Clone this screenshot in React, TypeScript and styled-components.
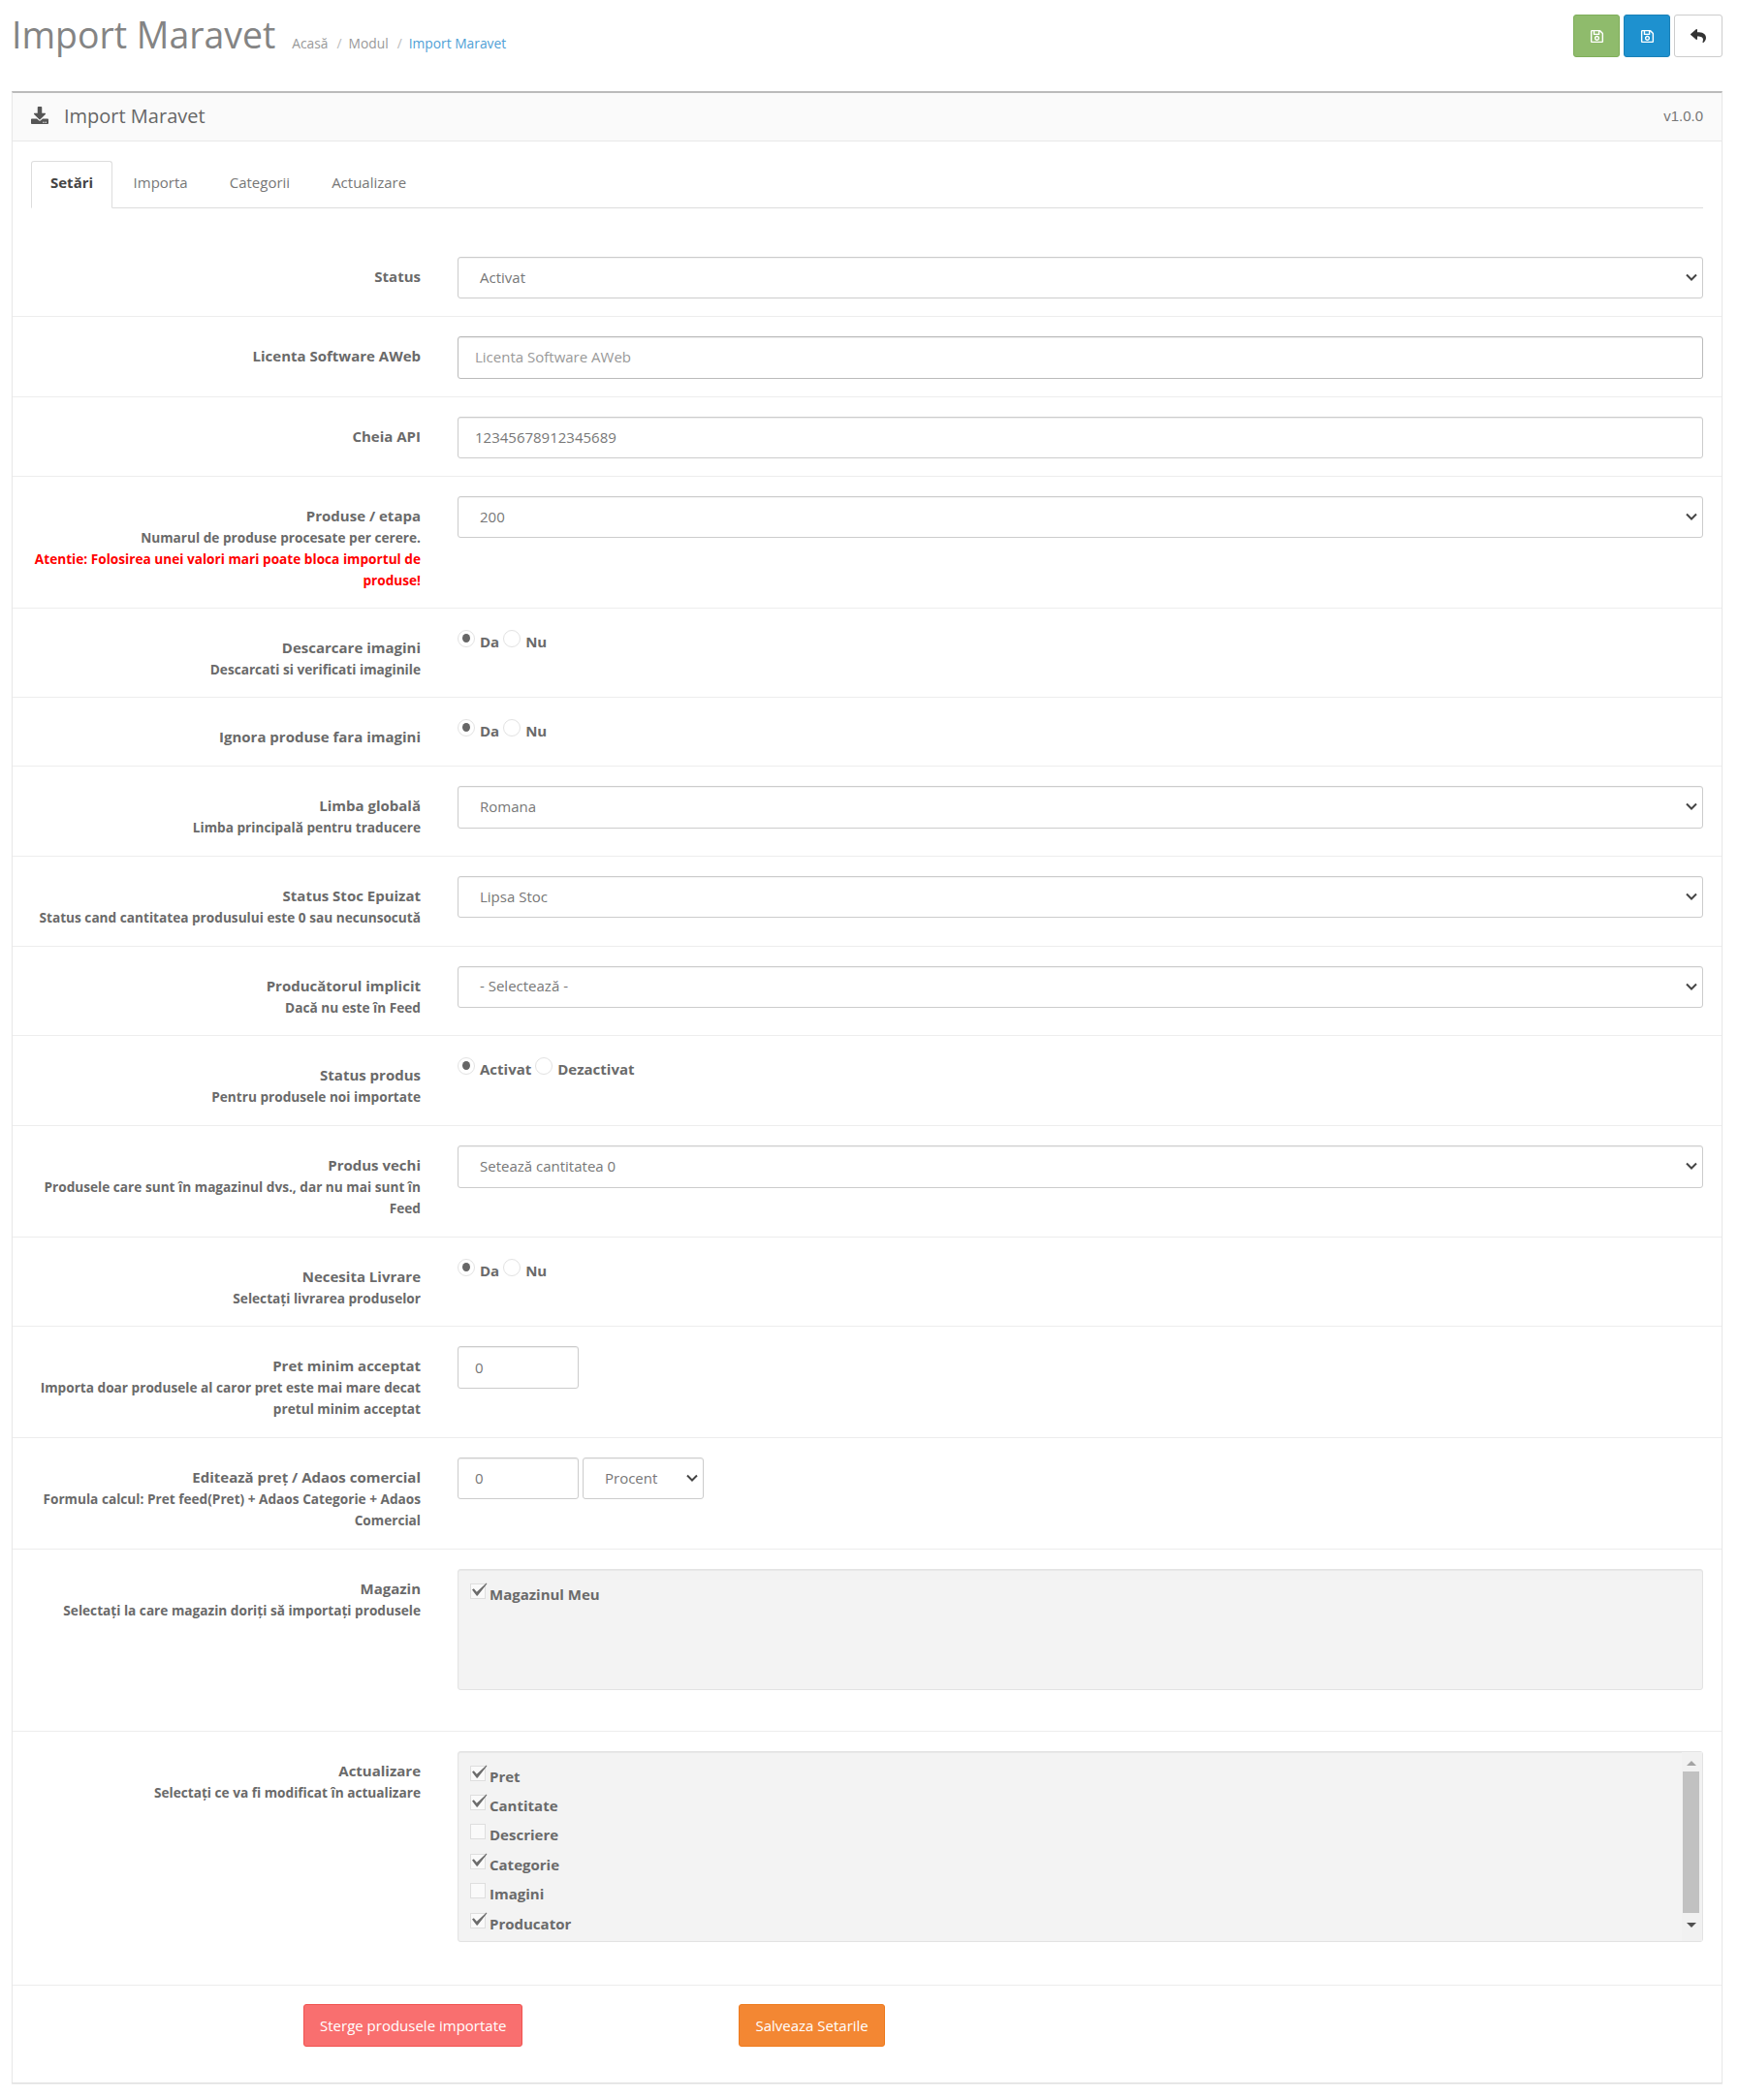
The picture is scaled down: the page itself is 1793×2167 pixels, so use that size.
import React from "react";
import styled, { createGlobalStyle } from "styled-components";
import { FaDownload, FaRegSave, FaReply } from "react-icons/fa";

const Global = createGlobalStyle`
  html, body { margin: 0; padding: 0; background: #fff; }
  body { font-family: "Open Sans", "Liberation Sans", sans-serif; font-size: 14px; color: #666; }
`;

const Page = styled.div`
  width: 1793px;
  height: 2167px;
  box-sizing: border-box;
  padding: 0 16px 0 12px;
  overflow: hidden;
`;

const Header = styled.header`
  display: flex;
  justify-content: space-between;
  align-items: flex-start;
  height: 94px;
`;

const TitleGroup = styled.div`
  display: flex;
  align-items: baseline;
  gap: 17px;
  padding-top: 10px;
`;

const Title = styled.h1`
  margin: 0;
  font-size: 37.4px;
  line-height: 52px;
  font-weight: 400;
  color: #848484;
`;

const Crumbs = styled.ol`
  display: flex;
  margin: 0;
  padding: 0;
  list-style: none;
  font-size: 13.8px;
  color: #999;
`;

const Crumb = styled.li<{ $active?: boolean }>`
  color: ${(p) => (p.$active ? "#4f9fd6" : "#999")};
  &:not(:first-child)::before {
    content: "/";
    padding: 0 7px 0 9px;
    color: #bbb;
  }
`;

const Actions = styled.div`
  display: flex;
  gap: 4px;
  padding-top: 15px;
`;

const ActionButton = styled.button<{ $bg: string; $edge: string; $fg: string; $w: number; $size: number }>`
  display: flex;
  align-items: center;
  justify-content: center;
  width: ${(p) => p.$w}px;
  height: 44px;
  padding: 0;
  background: ${(p) => p.$bg};
  border: 1px solid ${(p) => p.$edge};
  border-radius: 3px;
  color: ${(p) => p.$fg};
  font-size: ${(p) => p.$size}px;
`;

const Panel = styled.section`
  border: 1px solid #e8e8e8;
  border-top: 2px solid #bbb;
  border-bottom: 1px solid #ddd;
  box-shadow: 0 1px 1px rgba(0, 0, 0, 0.05);
`;

const PanelHeading = styled.div`
  display: flex;
  align-items: center;
  box-sizing: border-box;
  height: 50px;
  padding: 0 19px 3px;
  background: #fafafa;
  border-bottom: 1px solid #e8e8e8;
`;

const PanelIcon = styled.span`
  display: flex;
  width: 34px;
  color: #555;
  font-size: 18px;
`;

const PanelTitle = styled.h3`
  flex: 1;
  margin: 0;
  font-size: 20px;
  font-weight: 400;
  color: #666;
`;

const Version = styled.span`
  font-family: "Liberation Sans", Arial, sans-serif;
  font-size: 15px;
  color: #777;
`;

const Tabs = styled.ul`
  display: flex;
  margin: 20px 19px 0;
  padding: 0;
  list-style: none;
  height: 48px;
  border-bottom: 1px solid #ddd;
`;

const Tab = styled.li<{ $active?: boolean }>`
  display: flex;
  align-items: center;
  height: ${(p) => (p.$active ? 49 : 48)}px;
  box-sizing: border-box;
  padding: 0 ${(p) => (p.$active ? 19 : 20.5)}px 5px;
  font-size: 15px;
  font-weight: ${(p) => (p.$active ? 700 : 400)};
  color: ${(p) => (p.$active ? "#444" : "#777")};
  background: ${(p) => (p.$active ? "#fff" : "transparent")};
  border: ${(p) => (p.$active ? "1px solid #ddd" : "1px solid transparent")};
  border-bottom-color: ${(p) => (p.$active ? "#fff" : "transparent")};
  border-radius: 3px 3px 0 0;
`;

const Form = styled.form`
  padding-top: 30px;
`;

const Row = styled.div<{ $end?: number }>`
  display: grid;
  grid-template-columns: 421px 1285px;
  column-gap: 38px;
  padding: 20px 19px ${(p) => 18 + (p.$end ?? 0)}px 0;
  border-bottom: 1px solid #ededed;
  &:last-child { border-bottom: 0; }
`;

const Label = styled.label`
  display: block;
  padding-top: 10px;
  padding-left: 20px;
  text-align: right;
  font-size: 15px;
  line-height: 21.86px;
  font-weight: 700;
  color: #6a6a6a;
`;

const Help = styled.span`
  display: block;
  font-size: 13.65px;
`;

const Warn = styled.span`
  display: block;
  margin-bottom: -0.7px;
  font-size: 13.65px;
  color: #f00;
`;

const Field = styled.input<{ $strong?: boolean }>`
  display: block;
  box-sizing: border-box;
  width: 100%;
  height: 43.33px;
  padding: 0 17px 1px;
  background: #fff;
  border: 1px solid ${(p) => (p.$strong ? "#bbb" : "#ccc")};
  border-radius: 3px;
  box-shadow: inset 0 1px 1px rgba(0, 0, 0, 0.075);
  font: 400 15px "Open Sans", sans-serif;
  color: #777;
  &::placeholder { color: #999; opacity: 1; }
`;

const ShortField = styled(Field)`
  width: 125px;
`;

const Picker = styled.div<{ $short?: boolean }>`
  position: relative;
  display: flex;
  align-items: center;
  box-sizing: border-box;
  width: ${(p) => (p.$short ? "125px" : "100%")};
  height: 43.33px;
  padding: 0 0 2px 22px;
  background: #fff;
  border: 1px solid #ccc;
  border-radius: 3px;
  box-shadow: inset 0 1px 1px rgba(0, 0, 0, 0.05);
  font-size: 15px;
  color: #777;
`;

const Chevron = styled.svg`
  position: absolute;
  right: 5px;
  top: 15px;
  width: 12px;
  height: 10px;
`;

const Inline = styled.div`
  display: flex;
  gap: 4px;
`;

const RadioLine = styled.div`
  display: flex;
  align-items: flex-start;
  font-size: 15px;
  font-weight: 700;
  color: #6a6a6a;
  padding-top: 1px;
`;

const RadioOption = styled.span`
  display: flex;
  align-items: flex-start;
  margin-right: 4px;
  line-height: 26px;
`;

const RadioDot = styled.i<{ $on?: boolean }>`
  position: relative;
  display: block;
  box-sizing: border-box;
  width: 18px;
  height: 18px;
  margin: 1px 5px 0 0;
  background: #fff;
  border: 1px solid #e2e2e2;
  border-radius: 50%;
  &::after {
    content: "";
    display: ${(p) => (p.$on ? "block" : "none")};
    position: absolute;
    left: 4px;
    top: 3px;
    width: 8px;
    height: 9px;
    border-radius: 50%;
    background: #666;
  }
`;

const Well = styled.div<{ $h: number }>`
  display: flex;
  box-sizing: border-box;
  height: ${(p) => p.$h}px;
  background: #f3f3f3;
  border: 1px solid #e3e3e3;
  border-radius: 3px;
  box-shadow: inset 0 1px 1px rgba(0, 0, 0, 0.05);
`;

const CheckList = styled.ul`
  flex: 1;
  margin: 0;
  padding: 10px 0 0 12px;
  list-style: none;
`;

const CheckItem = styled.li`
  display: flex;
  align-items: flex-start;
  height: 30.4px;
  font-size: 15px;
  font-weight: 700;
  line-height: 30px;
  color: #6a6a6a;
`;

const CheckBox = styled.span`
  position: relative;
  display: block;
  box-sizing: border-box;
  width: 16px;
  height: 16px;
  margin: 4px 4px 0 0;
  background: #fafafa;
  border: 1px solid #dedede;
`;

const CheckMark = styled.svg`
  position: absolute;
  left: 0;
  top: -2px;
  width: 18px;
  height: 16px;
`;

const Scrollbar = styled.div`
  display: flex;
  flex-direction: column;
  align-items: center;
  box-sizing: border-box;
  width: 21px;
  padding: 2px 2px 0 0;
  background: #f1f1f1;
`;

const Arrow = styled.i<{ $down?: boolean }>`
  display: block;
  width: 0;
  height: 0;
  margin: ${(p) => (p.$down ? "10px 0 0" : "7px 0 6px")};
  border-left: 5px solid transparent;
  border-right: 5px solid transparent;
  border-bottom: ${(p) => (p.$down ? "0" : "5px solid #a3a3a3")};
  border-top: ${(p) => (p.$down ? "5px solid #505050" : "0")};
`;

const Thumb = styled.div`
  width: 17px;
  height: 146px;
  background: #c1c1c1;
`;

const Footer = styled.div`
  display: flex;
  gap: 223px;
  padding: 19px 0 37px 300px;
`;

const SubmitButton = styled.button<{ $bg: string; $edge: string }>`
  height: 44px;
  padding: 0 16px;
  background: ${(p) => p.$bg};
  border: 1px solid ${(p) => p.$edge};
  border-radius: 3px;
  color: #fff;
  font: 400 15px "Open Sans", sans-serif;
`;

const Select = ({ value, short }: { value: string; short?: boolean }) => (
  <Picker $short={short}>
    {value}
    <Chevron viewBox="0 0 12 10">
      <path d="M1 2.5 L6 7.5 L11 2.5" fill="none" stroke="#444" strokeWidth="2" />
    </Chevron>
  </Picker>
);

const Radios = ({ on, off }: { on: string; off: string }) => (
  <RadioLine>
    <RadioOption>
      <RadioDot $on />
      {on}
    </RadioOption>
    <RadioOption>
      <RadioDot />
      {off}
    </RadioOption>
  </RadioLine>
);

const Check = ({ label, on }: { label: string; on?: boolean }) => (
  <CheckItem>
    <CheckBox>
      {on && (
        <CheckMark viewBox="0 0 18 16">
          <path d="M1 7.5 L2.8 6.2 L5.8 9.8 L15.8 0.5 L16.4 1.2 L6.6 13.8 L5.8 13.8 Z" fill="#6c6c6c" />
        </CheckMark>
      )}
    </CheckBox>
    {label}
  </CheckItem>
);

export default function App() {
  return (
    <Page>
      <Global />
      <Header>
        <TitleGroup>
          <Title>Import Maravet</Title>
          <Crumbs>
            <Crumb>Acasă</Crumb>
            <Crumb>Modul</Crumb>
            <Crumb $active>Import Maravet</Crumb>
          </Crumbs>
        </TitleGroup>
        <Actions>
          <ActionButton $bg="#8fbb6c" $edge="#7fae5a" $fg="#fff" $w={48} $size={15}><FaRegSave /></ActionButton>
          <ActionButton $bg="#1e91cf" $edge="#1a80b6" $fg="#fff" $w={48} $size={15}><FaRegSave /></ActionButton>
          <ActionButton $bg="#fff" $edge="#ccc" $fg="#333" $w={50} $size={16}><FaReply /></ActionButton>
        </Actions>
      </Header>
      <Panel>
        <PanelHeading>
          <PanelIcon><FaDownload /></PanelIcon>
          <PanelTitle>Import Maravet</PanelTitle>
          <Version>v1.0.0</Version>
        </PanelHeading>
        <Tabs>
          <Tab $active>Setări</Tab>
          <Tab>Importa</Tab>
          <Tab>Categorii</Tab>
          <Tab>Actualizare</Tab>
        </Tabs>
        <Form>
          <Row>
            <Label>Status</Label>
            <Select value="Activat" />
          </Row>
          <Row>
            <Label>Licenta Software AWeb</Label>
            <Field placeholder="Licenta Software AWeb" readOnly $strong />
          </Row>
          <Row>
            <Label>Cheia API</Label>
            <Field value="12345678912345689" readOnly />
          </Row>
          <Row>
            <Label>
              Produse / etapa
              <Help>Numarul de produse procesate per cerere.</Help>
              <Warn>Atentie: Folosirea unei valori mari poate bloca importul de produse!</Warn>
            </Label>
            <Select value="200" />
          </Row>
          <Row>
            <Label>
              Descarcare imagini
              <Help>Descarcati si verificati imaginile</Help>
            </Label>
            <Radios on="Da" off="Nu" />
          </Row>
          <Row>
            <Label>Ignora produse fara imagini</Label>
            <Radios on="Da" off="Nu" />
          </Row>
          <Row>
            <Label>
              Limba globală
              <Help>Limba principală pentru traducere</Help>
            </Label>
            <Select value="Romana" />
          </Row>
          <Row>
            <Label>
              Status Stoc Epuizat
              <Help>Status cand cantitatea produsului este 0 sau necunsocută</Help>
            </Label>
            <Select value="Lipsa Stoc" />
          </Row>
          <Row>
            <Label>
              Producătorul implicit
              <Help>Dacă nu este în Feed</Help>
            </Label>
            <Select value="- Selectează -" />
          </Row>
          <Row>
            <Label>
              Status produs
              <Help>Pentru produsele noi importate</Help>
            </Label>
            <Radios on="Activat" off="Dezactivat" />
          </Row>
          <Row>
            <Label>
              Produs vechi
              <Help>Produsele care sunt în magazinul dvs., dar nu mai sunt în Feed</Help>
            </Label>
            <Select value="Setează cantitatea 0" />
          </Row>
          <Row>
            <Label>
              Necesita Livrare
              <Help>Selectați livrarea produselor</Help>
            </Label>
            <Radios on="Da" off="Nu" />
          </Row>
          <Row>
            <Label>
              Pret minim acceptat
              <Help>Importa doar produsele al caror pret este mai mare decat pretul minim acceptat</Help>
            </Label>
            <ShortField value="0" readOnly />
          </Row>
          <Row>
            <Label>
              Editează preț / Adaos comercial
              <Help>Formula calcul: Pret feed(Pret) + Adaos Categorie + Adaos Comercial</Help>
            </Label>
            <Inline>
              <ShortField value="0" readOnly />
              <Select value="Procent" short />
            </Inline>
          </Row>
          <Row $end={24}>
            <Label>
              Magazin
              <Help>Selectați la care magazin doriți să importați produsele</Help>
            </Label>
            <Well $h={125}>
              <CheckList>
                <Check label="Magazinul Meu" on />
              </CheckList>
            </Well>
          </Row>
          <Row $end={26}>
            <Label>
              Actualizare
              <Help>Selectați ce va fi modificat în actualizare</Help>
            </Label>
            <Well $h={197}>
              <CheckList>
                <Check label="Pret" on />
                <Check label="Cantitate" on />
                <Check label="Descriere" />
                <Check label="Categorie" on />
                <Check label="Imagini" />
                <Check label="Producator" on />
              </CheckList>
              <Scrollbar>
                <Arrow />
                <Thumb />
                <Arrow $down />
              </Scrollbar>
            </Well>
          </Row>
          <Footer>
            <SubmitButton $bg="#f96f6f" $edge="#f0524f">Sterge produsele importate</SubmitButton>
            <SubmitButton $bg="#f38733" $edge="#ee7a1c">Salveaza Setarile</SubmitButton>
          </Footer>
        </Form>
      </Panel>
    </Page>
  );
}
